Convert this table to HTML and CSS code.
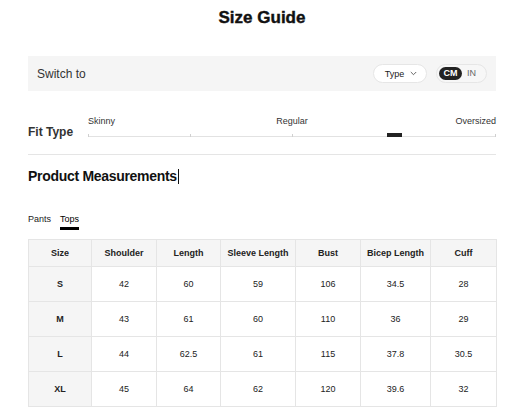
FILE: index.html
```html
<!DOCTYPE html>
<html lang="en">
<head>
<meta charset="utf-8">
<title>Size Guide</title>
<link rel="stylesheet" href="styles.css">
</head>
<body>
<div class="page">
  <h1 class="title">Size Guide</h1>

  <div class="switch-bar">
    <span class="switch-label">Switch to</span>
    <div class="switch-controls">
      <button class="type-select">Type
        <svg class="chev" width="7" height="5" viewBox="0 0 7 5"><path d="M0.8 1 L3.5 3.7 L6.2 1" fill="none" stroke="#555" stroke-width="0.9"/></svg>
      </button>
      <div class="unit-toggle">
        <span class="unit active">CM</span>
        <span class="unit">IN</span>
      </div>
    </div>
  </div>

  <div class="fit">
    <div class="fit-label">Fit Type</div>
    <div class="fit-scale">
      <div class="fit-names">
        <span class="n-left">Skinny</span>
        <span class="n-mid">Regular</span>
        <span class="n-right">Oversized</span>
      </div>
      <div class="track">
        <span class="tick t0"></span>
        <span class="tick t25"></span>
        <span class="tick t50"></span>
        <span class="tick t75"></span>
        <span class="tick t100"></span>
        <span class="marker"></span>
      </div>
    </div>
  </div>

  <h2 class="section-title">Product Measurements<span class="caret"></span></h2>

  <div class="tabs">
    <span class="tab">Pants</span>
    <span class="tab active">Tops</span>
  </div>

  <table class="sizes">
    <colgroup>
      <col class="c1"><col class="c2"><col class="c3"><col class="c4"><col class="c5"><col class="c6"><col class="c7">
    </colgroup>
    <thead>
      <tr><th>Size</th><th>Shoulder</th><th>Length</th><th>Sleeve Length</th><th>Bust</th><th>Bicep Length</th><th>Cuff</th></tr>
    </thead>
    <tbody>
      <tr><th>S</th><td>42</td><td>60</td><td>59</td><td>106</td><td>34.5</td><td>28</td></tr>
      <tr><th>M</th><td>43</td><td>61</td><td>60</td><td>110</td><td>36</td><td>29</td></tr>
      <tr><th>L</th><td>44</td><td>62.5</td><td>61</td><td>115</td><td>37.8</td><td>30.5</td></tr>
      <tr><th>XL</th><td>45</td><td>64</td><td>62</td><td>120</td><td>39.6</td><td>32</td></tr>
    </tbody>
  </table>
</div>
</body>
</html>
```

FILE: styles.css
```css
* { box-sizing: border-box; }

html, body {
  margin: 0;
  padding: 0;
  background: #fff;
}

body {
  font-family: "Liberation Sans", Arial, sans-serif;
  color: #222;
}

.page {
  padding: 8px 13px 0 28px;
  width: 509px;
}

.title {
  margin: 0;
  text-align: center;
  font-size: 17px;
  line-height: 20px;
  font-weight: 700;
  color: #111;
  -webkit-text-stroke: 0.4px #111;
  width: 468px;
}

.switch-bar {
  margin-top: 28px;
  height: 35px;
  background: #f5f5f5;
  display: flex;
  align-items: center;
  justify-content: space-between;
  padding: 0 9px;
}

.switch-label {
  font-size: 12px;
  color: #333;
}

.switch-controls {
  display: flex;
  align-items: center;
  gap: 9px;
}

.type-select {
  width: 54px;
  height: 19px;
  border: 1px solid #e6e6e6;
  border-radius: 10px;
  background: #fff;
  font-family: inherit;
  font-size: 9px;
  color: #222;
  display: flex;
  align-items: center;
  justify-content: center;
  gap: 6px;
  padding: 0 0 0 2px;
}

.chev { display: block; }

.unit-toggle {
  width: 51px;
  height: 19px;
  border: 1px solid #e6e6e6;
  border-radius: 10px;
  background: #f7f7f7;
  display: flex;
  align-items: center;
  padding: 0 2px;
  gap: 5px;
}

.unit {
  font-size: 9px;
  color: #666;
  line-height: 13px;
}

.unit.active {
  width: 23px;
  height: 13px;
  border-radius: 7px;
  background: #222;
  color: #fff;
  font-weight: 700;
  text-align: center;
}

.fit {
  display: flex;
  align-items: flex-end;
  padding-top: 25px;
  padding-bottom: 17px;
  border-bottom: 1px solid #e5e5e5;
}

.fit-label {
  width: 60px;
  flex: none;
  font-size: 12px;
  font-weight: 700;
  line-height: 10px;
  color: #333;
}

.fit-scale {
  flex: 1;
}

.fit-names {
  display: grid;
  grid-template-columns: 1fr auto 1fr;
  font-size: 9px;
  line-height: 11px;
  color: #333;
  margin-bottom: 7px;
}

.n-left { text-align: left; }
.n-mid { text-align: center; }
.n-right { text-align: right; }

.track {
  position: relative;
  height: 3px;
  border-bottom: 1px solid #e2e2e2;
}

.tick {
  position: absolute;
  bottom: -1px;
  width: 1px;
  height: 3px;
  background: #d0d0d0;
}

.t0 { left: 0; }
.t25 { left: 25%; }
.t50 { left: 50%; }
.t75 { left: 75%; }
.t100 { right: 0; }

.marker {
  position: absolute;
  left: calc(75% - 7px);
  bottom: -1px;
  width: 15px;
  height: 4px;
  background: #222;
}

.section-title {
  margin: 13px 0 0;
  font-size: 14px;
  line-height: 17px;
  font-weight: 700;
  letter-spacing: -0.3px;
  color: #111;
  display: flex;
  align-items: center;
}

.caret {
  display: inline-block;
  width: 1px;
  height: 15px;
  background: #111;
  margin-left: 1px;
}

.tabs {
  margin-top: 29px;
  display: flex;
  gap: 9px;
}

.tab {
  font-size: 9px;
  line-height: 11px;
  color: #222;
  padding-bottom: 2px;
}

.tab.active {
  color: #000;
  border-bottom: 3px solid #000;
  padding-bottom: 2px;
}

.sizes {
  margin-top: 9px;
  width: 468px;
  border-collapse: collapse;
  table-layout: fixed;
  font-size: 9px;
  color: #222;
}

.c1 { width: 63px; }
.c2 { width: 65px; }
.c3 { width: 64px; }
.c4 { width: 75px; }
.c5 { width: 65px; }
.c6 { width: 70px; }
.c7 { width: 66px; }

.sizes th,
.sizes td {
  border: 1px solid #e5e5e5;
  text-align: center;
  padding: 0;
}

.sizes thead th {
  height: 27px;
  background: #f5f5f5;
  font-weight: 700;
}

.sizes tbody td,
.sizes tbody th {
  height: 35px;
}

.sizes tbody th {
  background: #f5f5f5;
  font-weight: 700;
}
```
